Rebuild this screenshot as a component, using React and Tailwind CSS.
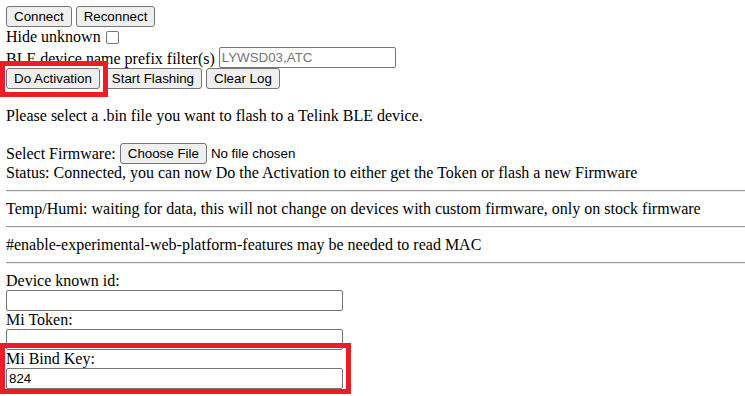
import React from "react";

const btn =
  "h-[21px] px-[7px] bg-[#efefef] border border-[#767676] rounded-[3px] text-[13.33px] leading-none text-black font-['Liberation_Sans',Arial,sans-serif]";

const Btn = ({ children }) => <button type="button" className={btn}>{children}</button>;

const Field = ({ value = "", placeholder, className = "" }) => (
  <input
    type="text"
    defaultValue={value}
    placeholder={placeholder}
    className={`h-[21px] border border-[#767676] rounded-[2px] px-[2px] text-[13.33px] bg-white text-black placeholder:text-[#757575] font-['Liberation_Sans',Arial,sans-serif] ${className}`}
  />
);

const Rule = () => <div className="my-[8px] h-[2px] border-t border-t-[#9a9a9a] border-b border-b-[#eeeeee]" />;

export default function App() {
  return (
    <div className="relative min-h-[396px] bg-white pl-[6px] pt-[6px] text-[16px] leading-[18px] text-black font-['Liberation_Serif','Times_New_Roman',serif]">
      <div className="flex gap-[4px]">
        <Btn>Connect</Btn>
        <Btn>Reconnect</Btn>
      </div>
      <div className="flex items-center h-[20px]">
        <span>Hide unknown</span>
        <input type="checkbox" className="ml-[5px] w-[13px] h-[13px] appearance-none border border-[#767676] rounded-[2px] bg-white" />
      </div>
      <div className="flex items-end h-[21px]">
        <span className="mr-[4px]">BLE device name prefix filter(s)</span>
        <Field className="w-[177px]" placeholder="LYWSD03,ATC" />
      </div>
      <div className="flex gap-[4px]">
        <Btn>Do Activation</Btn>
        <Btn>Start Flashing</Btn>
        <Btn>Clear Log</Btn>
      </div>
      <p className="my-[18px]">Please select a .bin file you want to flash to a Telink BLE device.</p>
      <div className="flex items-center h-[21px]">
        <span className="mr-[4px]">Select Firmware:</span>
        <Btn>Choose File</Btn>
        <span className="ml-[4px] text-[13.33px] font-['Liberation_Sans',Arial,sans-serif]">No file chosen</span>
      </div>
      <div>Status: Connected, you can now Do the Activation to either get the Token or flash a new Firmware</div>
      <Rule />
      <div>Temp/Humi: waiting for data, this will not change on devices with custom firmware, only on stock firmware</div>
      <Rule />
      <div>#enable-experimental-web-platform-features may be needed to read MAC</div>
      <Rule />
      <div>Device known id:</div>
      <Field className="w-[337px]" />
      <div>Mi Token:</div>
      <Field className="w-[337px]" />
      <div>Mi Bind Key:</div>
      <Field className="w-[337px]" value="824" />

      <div className="absolute left-0 top-[61px] w-[108px] h-[36px] border-[5px] border-[#ee1c25] pointer-events-none" />
      <div className="absolute left-0 top-[343px] w-[351px] h-[51px] border-[5px] border-[#ee1c25] pointer-events-none" />
    </div>
  );
}
